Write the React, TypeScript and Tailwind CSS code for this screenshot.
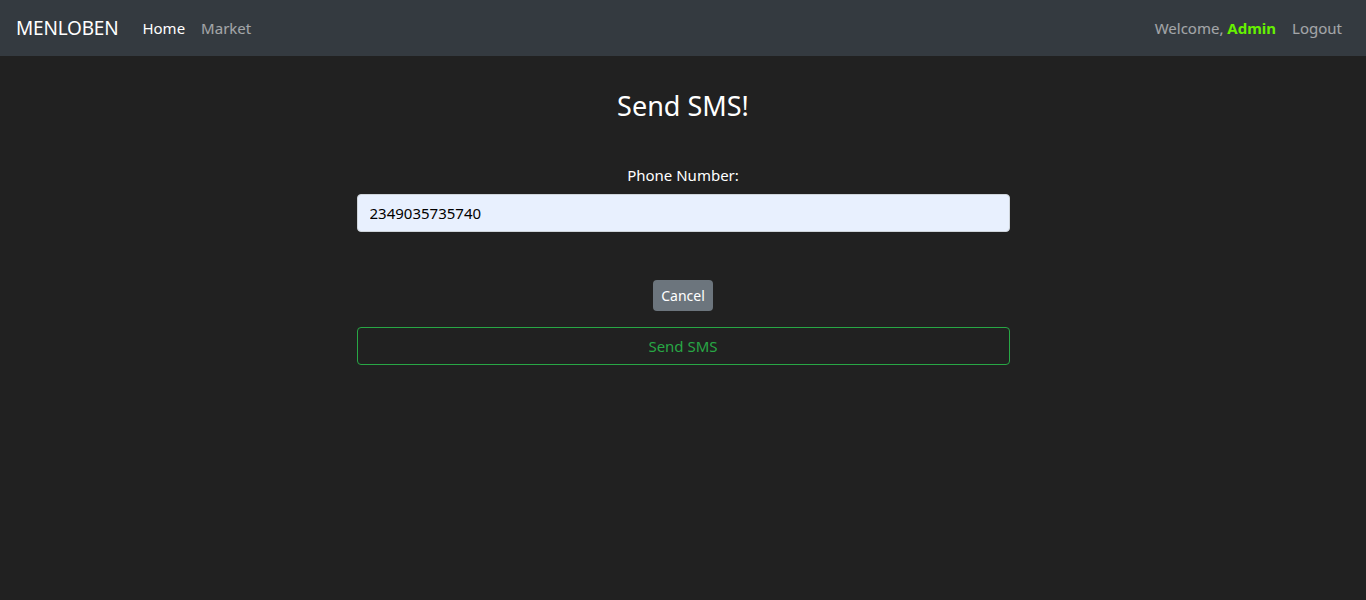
export default function App() {
  return (
    <div className="min-h-[600px] bg-[#212121] font-['Noto_Sans',sans-serif] text-white">
      <nav className="h-14 bg-[#343a40] flex items-center justify-between px-4">
        <div className="flex items-center">
          <span className="text-[19px] mr-4 text-white tracking-[-0.2px]">MENLOBEN</span>
          <a className="px-2 text-[15px] text-white">Home</a>
          <a className="px-2 text-[15px] text-white/55">Market</a>
        </div>
        <div className="flex items-center">
          <span className="px-2 text-[15px] text-white/55">
            Welcome, <b className="text-[#66f000] font-bold">Admin</b>
          </span>
          <a className="px-2 text-[15px] text-white/55">Logout</a>
        </div>
      </nav>

      <div className="w-[653px] mx-auto flex flex-col items-center">
        <h3 className="text-[27px] mt-[33px] leading-tight">Send SMS!</h3>
        <label className="text-[15px] mt-[41px]">Phone Number:</label>
        <input
          className="mt-[8px] w-full h-[38px] rounded bg-[#e8f0fe] border border-[#ced4da] px-3 text-black text-[15px]"
          defaultValue="2349035735740"
        />
        <button className="mt-[48px] h-[31px] px-2 rounded bg-[#6c757d] text-white text-[14px]">
          Cancel
        </button>
        <button className="mt-4 w-full h-[38px] rounded border border-[#28a745] text-[#28a745] text-[15px]">
          Send SMS
        </button>
      </div>
    </div>
  );
}
